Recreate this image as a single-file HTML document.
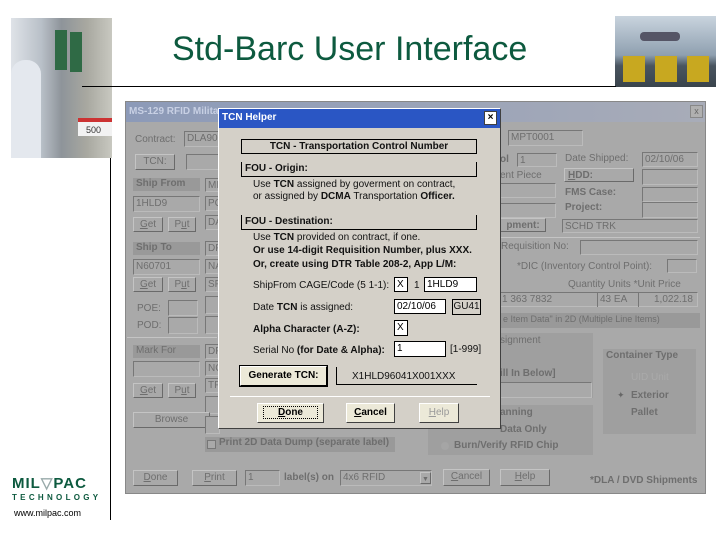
<!DOCTYPE html>
<html><head><meta charset="utf-8"><style>
*{margin:0;padding:0;box-sizing:border-box}
body{width:720px;height:540px;background:#fff;position:relative;overflow:hidden;font-family:"Liberation Sans",sans-serif}
.a{position:absolute}
.t{position:absolute;font-size:10px;white-space:nowrap;line-height:12px}
.m{color:#6e6e6e}
.m b{color:#666}
.bx{position:absolute;border:1px solid #777;border-right-color:#bbb;border-bottom-color:#bbb;background:#a9a9a9;font-size:10px;color:#6e6e6e;padding-left:2px;line-height:13px;overflow:hidden;white-space:nowrap}
.bt{position:absolute;border:1px solid;border-color:#c4c4c4 #6a6a6a #6a6a6a #c4c4c4;background:#a9a9a9;font-size:10px;color:#6e6e6e;text-align:center;line-height:13px}
.band{position:absolute;background:#999;font-size:10px;color:#6e6e6e;padding-left:3px;line-height:12px;font-weight:bold}
.grp{position:absolute;background:#9f9f9f}
.db{position:absolute;border:1px solid;border-color:#fff #404040 #404040 #fff;background:#ece9d8;font-size:10px;font-weight:bold;text-align:center;color:#000}
.wb{position:absolute;background:#fff;border:1px solid #000;font-size:10px;line-height:13px;padding-left:2px;color:#000}
.d{color:#111;font-size:10px}
</style></head><body>
<!-- header -->
<div class="a" style="left:11px;top:18px;width:101px;height:140px;background:linear-gradient(90deg,#dfe3e8 0%,#b9c0c8 30%,#8e949a 50%,#a8a8a0 75%,#c8c8c0 100%)"></div>
<div class="a" style="left:55px;top:30px;width:12px;height:40px;background:#2f6a45"></div>
<div class="a" style="left:70px;top:32px;width:12px;height:40px;background:#2f6a45"></div>
<div class="a" style="left:11px;top:60px;width:30px;height:98px;background:#e4e8ee;border-radius:14px 14px 0 0"></div>
<div class="a" style="left:78px;top:118px;width:34px;height:18px;background:#f2f2f2;border-top:4px solid #c33"></div>
<div class="t" style="left:86px;top:124px;font-size:9px;color:#333">500</div>
<div class="a" style="left:615px;top:16px;width:101px;height:71px;background:linear-gradient(180deg,#c9d4de 0%,#8fa0b0 55%,#4a5560 70%,#3a444c 100%)"></div>
<div class="a" style="left:623px;top:56px;width:22px;height:26px;background:#c8a820"></div>
<div class="a" style="left:655px;top:56px;width:22px;height:26px;background:#c8a820"></div>
<div class="a" style="left:687px;top:56px;width:22px;height:26px;background:#c8a820"></div>
<div class="a" style="left:640px;top:32px;width:40px;height:9px;background:#556;border-radius:4px"></div>
<div class="t" style="left:172px;top:30px;font-size:34px;line-height:38px;color:#0d5a3f">Std-Barc User Interface</div>
<div class="a" style="left:82px;top:86px;width:534px;height:1px;background:#000"></div>
<div class="a" style="left:110px;top:158px;width:1px;height:362px;background:#000"></div>
<div class="t" style="left:12px;top:476px;font-size:15px;font-weight:bold;color:#0d5a3f;letter-spacing:1px;line-height:16px">MIL<span style="color:#9aa">▽</span>PAC</div>
<div class="t" style="left:12px;top:492px;font-size:8px;color:#0d5a3f;letter-spacing:3.3px;font-weight:bold">TECHNOLOGY</div>
<div class="t" style="left:14px;top:507px;font-size:9px;color:#000">www.milpac.com</div>

<!-- main window -->
<div class="a" style="left:125px;top:101px;width:581px;height:393px;background:#a9a9a9;border:1px solid #888"></div>
<div class="a" style="left:126px;top:102px;width:579px;height:20px;background:linear-gradient(90deg,#8c9ab8,#a8acb8)"></div>
<div class="t" style="left:129px;top:106px;color:#c8d0e4;font-weight:bold">MS-129 RFID Militar</div>
<div class="a" style="left:690px;top:105px;width:13px;height:13px;background:#b0b0b0;border:1px solid #888;font-size:9px;text-align:center;line-height:11px;color:#666">x</div>
<div class="t m" style="left:135px;top:134px">Contract:</div>
<div class="bx" style="left:184px;top:131px;width:36px;height:16px">DLA900</div>
<div class="bt" style="left:135px;top:154px;width:40px;height:16px">TCN:</div>
<div class="bx" style="left:186px;top:154px;width:34px;height:16px"></div>
<div class="band" style="left:133px;top:178px;width:67px;height:13px">Ship From</div>
<div class="bx" style="left:205px;top:178px;width:15px;height:14px">MI</div>
<div class="bx" style="left:133px;top:196px;width:67px;height:16px">1HLD9</div>
<div class="bx" style="left:205px;top:196px;width:15px;height:15px">PC</div>
<div class="bt" style="left:133px;top:217px;width:30px;height:15px"><u>G</u>et</div>
<div class="bt" style="left:168px;top:217px;width:28px;height:15px">P<u>u</u>t</div>
<div class="bx" style="left:205px;top:215px;width:15px;height:15px">DA</div>
<div class="band" style="left:133px;top:242px;width:67px;height:13px">Ship To</div>
<div class="bx" style="left:205px;top:241px;width:15px;height:15px">DF</div>
<div class="bx" style="left:133px;top:259px;width:67px;height:16px">N60701</div>
<div class="bx" style="left:205px;top:259px;width:15px;height:15px">NA</div>
<div class="bt" style="left:133px;top:277px;width:30px;height:15px"><u>G</u>et</div>
<div class="bt" style="left:168px;top:277px;width:28px;height:15px">P<u>u</u>t</div>
<div class="bx" style="left:205px;top:277px;width:15px;height:15px">SF</div>
<div class="t m" style="left:137px;top:303px">POE:</div>
<div class="bx" style="left:168px;top:300px;width:30px;height:16px"></div>
<div class="t m" style="left:137px;top:320px">POD:</div>
<div class="bx" style="left:168px;top:317px;width:30px;height:17px"></div>
<div class="bx" style="left:205px;top:296px;width:15px;height:18px"></div>
<div class="bx" style="left:205px;top:316px;width:15px;height:18px"></div>
<div class="a" style="left:127px;top:337px;width:90px;height:1px;background:#c4c4c4"></div>
<div class="band" style="left:133px;top:345px;width:67px;height:13px;font-weight:normal">Mark For</div>
<div class="bx" style="left:205px;top:344px;width:15px;height:15px">DF</div>
<div class="bx" style="left:133px;top:361px;width:67px;height:16px"></div>
<div class="bx" style="left:205px;top:361px;width:15px;height:15px">NC</div>
<div class="bt" style="left:133px;top:383px;width:30px;height:15px"><u>G</u>et</div>
<div class="bt" style="left:168px;top:383px;width:28px;height:15px">P<u>u</u>t</div>
<div class="bx" style="left:205px;top:378px;width:15px;height:15px">TF</div>
<div class="bx" style="left:205px;top:396px;width:15px;height:18px"></div>
<div class="bt" style="left:133px;top:412px;width:77px;height:16px">Browse</div>
<div class="bx" style="left:205px;top:416px;width:15px;height:18px"></div>
<div class="band" style="left:205px;top:437px;width:190px;height:15px;font-weight:bold;padding-left:14px">Print 2D Data Dump (separate label)</div>
<div class="a" style="left:207px;top:440px;width:9px;height:9px;border:1px solid #777;background:#a9a9a9"></div>
<div class="bt" style="left:133px;top:470px;width:45px;height:16px"><u>D</u>one</div>
<div class="bt" style="left:192px;top:470px;width:45px;height:16px"><u>P</u>rint</div>
<div class="bx" style="left:245px;top:470px;width:35px;height:16px">1</div>
<div class="t m" style="left:284px;top:472px;font-weight:bold">label(s) on</div>
<div class="bx" style="left:340px;top:470px;width:92px;height:16px">4x6 RFID</div>
<div class="bt" style="left:420px;top:472px;width:11px;height:12px;font-size:7px">▼</div>
<div class="bt" style="left:443px;top:469px;width:47px;height:17px"><u>C</u>ancel</div>
<div class="bt" style="left:500px;top:469px;width:50px;height:17px"><u>H</u>elp</div>
<div class="t m" style="left:590px;top:475px;font-weight:bold">*DLA / DVD Shipments</div>

<!-- right side -->
<div class="bx" style="left:508px;top:130px;width:75px;height:16px">MPT0001</div>
<div class="t m" style="left:500px;top:154px;font-weight:bold">ol</div>
<div class="bx" style="left:517px;top:153px;width:40px;height:14px">1</div>
<div class="t m" style="left:500px;top:170px">ent Piece</div>
<div class="t m" style="left:565px;top:153px">Date Shipped:</div>
<div class="bx" style="left:642px;top:152px;width:56px;height:15px">02/10/06</div>
<div class="bt" style="left:564px;top:168px;width:70px;height:14px;text-align:left;padding-left:3px;font-weight:bold"><u>H</u>DD:</div>
<div class="bx" style="left:642px;top:169px;width:56px;height:16px"></div>
<div class="bx" style="left:500px;top:183px;width:56px;height:15px"></div>
<div class="t m" style="left:565px;top:187px;font-weight:bold">FMS Case:</div>
<div class="bx" style="left:642px;top:187px;width:56px;height:15px"></div>
<div class="bx" style="left:500px;top:203px;width:56px;height:15px"></div>
<div class="t m" style="left:565px;top:202px;font-weight:bold">Project:</div>
<div class="bx" style="left:642px;top:202px;width:56px;height:16px"></div>
<div class="bt" style="left:500px;top:218px;width:46px;height:14px;font-weight:bold">pment:</div>
<div class="bx" style="left:562px;top:219px;width:136px;height:14px">SCHD TRK</div>
<div class="a" style="left:500px;top:237px;width:200px;height:1px;background:#c4c4c4"></div>
<div class="t m" style="left:501px;top:241px">Requisition No:</div>
<div class="bx" style="left:580px;top:240px;width:118px;height:15px"></div>
<div class="t m" style="left:517px;top:261px">*DIC (Inventory Control Point):</div>
<div class="bx" style="left:667px;top:259px;width:30px;height:14px"></div>
<div class="t m" style="left:568px;top:279px">Quantity Units *Unit Price</div>
<div class="bx" style="left:500px;top:292px;width:198px;height:15px"></div>
<div class="t m" style="left:502px;top:294px">1 363 7832</div>
<div class="t m" style="left:600px;top:294px">43 EA</div>
<div class="t m" style="left:654px;top:294px">1,022.18</div>
<div class="a" style="left:597px;top:292px;width:1px;height:15px;background:#777"></div>
<div class="a" style="left:638px;top:292px;width:1px;height:15px;background:#777"></div>
<div class="band" style="left:500px;top:313px;width:200px;height:15px;font-weight:normal;font-size:9px">e Item Data" in 2D (Multiple Line Items)</div>
<div class="grp" style="left:428px;top:333px;width:165px;height:65px"></div>
<div class="t m" style="left:500px;top:335px">signment</div>
<div class="t m" style="left:500px;top:368px;font-weight:bold">ill In Below]</div>
<div class="bx" style="left:500px;top:382px;width:92px;height:16px"></div>
<div class="grp" style="left:428px;top:405px;width:165px;height:50px"></div>
<div class="t m" style="left:500px;top:407px;font-weight:bold">anning</div>
<div class="t m" style="left:500px;top:424px;font-weight:bold">Data Only</div>
<div class="t m" style="left:454px;top:440px;font-weight:bold">Burn/Verify RFID Chip</div>
<div class="a" style="left:441px;top:442px;width:8px;height:8px;border-radius:50%;background:#a5a5a5"></div>
<div class="grp" style="left:603px;top:349px;width:93px;height:85px"></div>
<div class="t m" style="left:606px;top:350px;font-weight:bold">Container Type</div>
<div class="t" style="left:631px;top:372px;color:#aaa">UID Unit</div>
<div class="t m" style="left:631px;top:390px;font-weight:bold">Exterior</div>
<div class="t m" style="left:631px;top:407px;font-weight:bold">Pallet</div>
<div class="t" style="left:617px;top:389px;color:#666;font-size:9px">✦</div>

<!-- dialog -->
<div class="a" style="left:218px;top:108px;width:283px;height:321px;background:#d4d0c8;border:1px solid;border-color:#fff #404040 #404040 #fff"></div>
<div class="a" style="left:219px;top:109px;width:281px;height:19px;background:#2a56c4"></div>
<div class="t" style="left:222px;top:112px;color:#fff;font-weight:bold">TCN Helper</div>
<div class="a" style="left:484px;top:111px;width:13px;height:14px;background:#fff;border:1px solid #404040;font-size:10px;text-align:center;line-height:11px;font-weight:bold">×</div>
<div class="a d" style="left:241px;top:139px;width:236px;height:15px;border:1px solid #000;text-align:center;font-weight:bold;line-height:13px">TCN - Transportation Control Number</div>
<div class="a d" style="left:241px;top:162px;width:236px;height:15px;border:1px solid #000;border-top:none;padding-left:3px;font-weight:bold;line-height:13px">FOU - Origin:</div>
<div class="t d" style="left:253px;top:179px">Use <b>TCN</b> assigned by goverment on contract,</div>
<div class="t d" style="left:253px;top:191px">or assigned by <b>DCMA</b> Transportation <b>Officer.</b></div>
<div class="a d" style="left:241px;top:215px;width:236px;height:15px;border:1px solid #000;border-top:none;padding-left:3px;font-weight:bold;line-height:13px">FOU - Destination:</div>
<div class="t d" style="left:253px;top:232px">Use <b>TCN</b> provided on contract, if one.</div>
<div class="t d" style="left:253px;top:245px;font-weight:bold">Or use 14-digit Requisition Number, plus XXX.</div>
<div class="t d" style="left:253px;top:259px;font-weight:bold">Or, create using DTR Table 208-2, App L/M:</div>
<div class="t d" style="left:253px;top:280px">ShipFrom CAGE/Code (5 1-1): </div>
<div class="wb" style="left:394px;top:277px;width:14px;height:15px">X</div>
<div class="t d" style="left:414px;top:280px">1</div>
<div class="wb" style="left:424px;top:277px;width:53px;height:15px">1HLD9</div>
<div class="t d" style="left:253px;top:302px">Date <b>TCN</b> is assigned:</div>
<div class="wb" style="left:394px;top:299px;width:52px;height:15px">02/10/06</div>
<div class="a d" style="left:452px;top:299px;width:29px;height:16px;border:1px solid #000;text-align:center;line-height:14px">GU41</div>
<div class="t d" style="left:253px;top:324px;font-weight:bold">Alpha Character (A-Z):</div>
<div class="wb" style="left:394px;top:320px;width:14px;height:16px">X</div>
<div class="t d" style="left:253px;top:345px">Serial No <b>(for Date &amp; Alpha):</b></div>
<div class="wb" style="left:394px;top:341px;width:52px;height:16px">1</div>
<div class="t d" style="left:450px;top:344px">[1-999]</div>
<div class="db" style="left:240px;top:366px;width:87px;height:20px;line-height:18px;border-color:#fff #000 #000 #fff;box-shadow:0 0 0 1px #000">Generate TCN:</div>
<div class="a" style="left:336px;top:367px;width:1px;height:18px;background:#000"></div>
<div class="a" style="left:336px;top:384px;width:141px;height:1px;background:#000"></div>
<div class="t d" style="left:352px;top:371px">X1HLD96041X001XXX</div>
<div class="a" style="left:230px;top:396px;width:260px;height:1px;background:#fff"></div>
<div class="db" style="left:257px;top:403px;width:67px;height:20px;line-height:18px"><span style="border:1px dotted #000;padding:0 14px"><u>D</u>one</span></div>
<div class="db" style="left:346px;top:403px;width:49px;height:20px;line-height:18px"><u>C</u>ancel</div>
<div class="db" style="left:419px;top:403px;width:40px;height:20px;line-height:18px;color:#999;font-weight:normal"><u>H</u>elp</div>
</body></html>
